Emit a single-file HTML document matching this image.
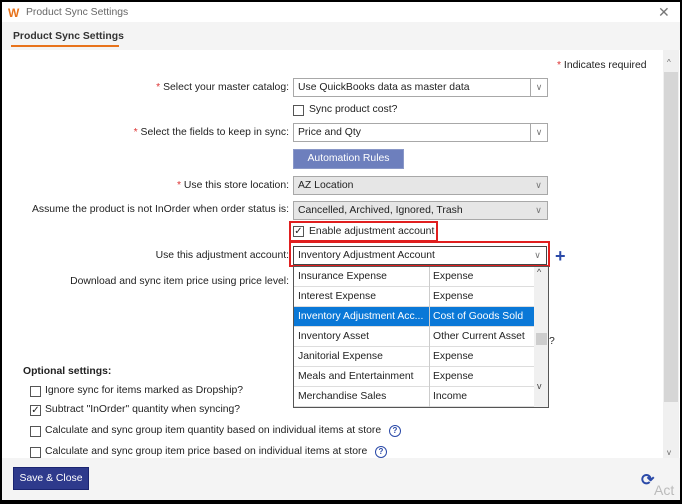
<!DOCTYPE html>
<html><head><style>
*{box-sizing:border-box;margin:0;padding:0}
body{width:682px;height:504px;background:#000;font-family:"Liberation Sans",sans-serif;font-size:10.4px;color:#222;position:relative;overflow:hidden}
.a{position:absolute}
.win{left:2px;top:2px;width:678px;height:498px;background:#fff}
.lbl{position:absolute;text-align:right;right:393px;white-space:nowrap}
.req{color:#d33}
.sel{position:absolute;left:293px;width:255px;height:19px;border:1px solid #a8a8a8;background:#fff;padding:3px 4px;white-space:nowrap}
.sel .d{position:absolute;right:0;top:0;width:17px;height:17px;border-left:1px solid #a8a8a8;color:#777;font-size:9px;text-align:center;line-height:17px}
.sel.g{background:#e6e6e6}
.sel.g .d{border-left:none}
.cb{position:absolute;width:11px;height:11px;border:1px solid #555;background:#fff;font-size:10px;line-height:9px;text-align:center}
.row{position:absolute;left:0;width:240px;height:20px;border-bottom:1px solid #ddd}
.row span{position:absolute;top:4px}
.help{position:absolute;width:12px;height:12px;border:1.5px solid #2b4aa8;border-radius:50%;color:#2b4aa8;font-size:8px;font-weight:bold;text-align:center;line-height:10px}
</style></head><body>
<div class="a win">
 <div class="a" style="left:6px;top:4px;color:#e8731b;font-weight:bold;font-size:12px">W</div>
 <div class="a" style="left:24px;top:5px;color:#666">Product Sync Settings</div>
 <div class="a" style="left:656px;top:2px;color:#777;font-size:14px">✕</div>
 <div class="a" style="left:0;top:20px;width:678px;height:28px;background:#f4f4f4"></div>
 <div class="a" style="left:11px;top:29px;font-weight:bold;color:#333">Product Sync Settings</div>
 <div class="a" style="left:9px;top:43px;width:108px;height:2px;background:#e8731b"></div>
 <div class="a" style="left:661px;top:48px;width:16px;height:408px;background:#f0f0f0"></div>
 <div class="a" style="left:665px;top:56px;color:#666;font-size:8px">^</div>
 <div class="a" style="left:662px;top:70px;width:14px;height:330px;background:#d6d6d6"></div>
 <div class="a" style="left:665px;top:446px;color:#666;font-size:8px">v</div>
 <div class="a" style="left:0;top:456px;width:678px;height:42px;background:#f4f4f4"></div>
</div>
<div class="a" style="left:557px;top:60px"><span class="req">*</span> Indicates required</div>

<div class="lbl" style="top:82px"><span class="req">*</span> Select your master catalog:</div>
<div class="sel" style="top:78px">Use QuickBooks data as master data<div class="d">∨</div></div>
<div class="cb" style="left:293px;top:105px"></div><div class="a" style="left:309px;top:104px">Sync product cost?</div>
<div class="lbl" style="top:127px"><span class="req">*</span> Select the fields to keep in sync:</div>
<div class="sel" style="top:123px">Price and Qty<div class="d">∨</div></div>
<div class="a" style="left:293px;top:149px;width:111px;height:20px;background:#6d7fbd;border:1px solid #8a98c8;color:#fff;text-align:center;line-height:18px">Automation Rules</div>
<div class="lbl" style="top:180px"><span class="req">*</span> Use this store location:</div>
<div class="sel g" style="top:176px">AZ Location<div class="d">∨</div></div>
<div class="lbl" style="top:204px">Assume the product is not InOrder when order status is:</div>
<div class="sel g" style="top:201px">Cancelled, Archived, Ignored, Trash<div class="d">∨</div></div>

<div class="a" style="left:289px;top:221px;width:149px;height:21px;border:2px solid #e01f1f"></div>
<div class="cb" style="left:293px;top:226px">✓</div><div class="a" style="left:309px;top:226px">Enable adjustment account</div>
<div class="lbl" style="top:250px">Use this adjustment account:</div>
<div class="a" style="left:289px;top:241px;width:261px;height:26px;border:2px solid #e01f1f"></div>
<div class="sel" style="top:246px;width:254px;border-color:#444">Inventory Adjustment Account<div class="d" style="border:none">∨</div></div>
<div class="a" style="left:555px;top:246px;color:#2b4aa8;font-size:18px;font-weight:bold">+</div>
<div class="lbl" style="top:276px">Download and sync item price using price level:</div>

<div class="a" style="left:293px;top:266px;width:256px;height:142px;border:1px solid #555;background:#fff;overflow:hidden">
 <div class="row" style="top:0"><span style="left:4px">Insurance Expense</span><span style="left:139px">Expense</span></div>
 <div class="row" style="top:20px"><span style="left:4px">Interest Expense</span><span style="left:139px">Expense</span></div>
 <div class="row" style="top:40px;background:#0a78d7;color:#fff"><span style="left:4px">Inventory Adjustment Acc...</span><span style="left:139px">Cost of Goods Sold</span></div>
 <div class="row" style="top:60px"><span style="left:4px">Inventory Asset</span><span style="left:139px">Other Current Asset</span></div>
 <div class="row" style="top:80px"><span style="left:4px">Janitorial Expense</span><span style="left:139px">Expense</span></div>
 <div class="row" style="top:100px"><span style="left:4px">Meals and Entertainment</span><span style="left:139px">Expense</span></div>
 <div class="row" style="top:120px"><span style="left:4px">Merchandise Sales</span><span style="left:139px">Income</span></div>
 <div class="a" style="left:135px;top:0;width:1px;height:142px;background:#ccc"></div>
 <div class="a" style="left:240px;top:0;width:15px;height:142px;background:#f0f0f0"></div>
 <div class="a" style="left:242px;top:66px;width:11px;height:12px;background:#cdcdcd"></div>
 <div class="a" style="left:243px;top:0;font-size:9px;color:#444">^</div>
 <div class="a" style="left:243px;top:114px;font-size:9px;color:#444">v</div>
</div>
<div class="a" style="left:549px;top:336px">?</div>

<div class="a" style="left:23px;top:366px;font-weight:bold">Optional settings:</div>
<div class="cb" style="left:30px;top:386px"></div><div class="a" style="left:45px;top:385px">Ignore sync for items marked as Dropship?</div>
<div class="cb" style="left:30px;top:405px">✓</div><div class="a" style="left:45px;top:404px">Subtract "InOrder" quantity when syncing?</div>
<div class="cb" style="left:30px;top:426px"></div><div class="a" style="left:45px;top:425px">Calculate and sync group item quantity based on individual items at store</div>
<div class="help" style="left:389px;top:425px">?</div>
<div class="cb" style="left:30px;top:447px"></div><div class="a" style="left:45px;top:446px">Calculate and sync group item price based on individual items at store</div>
<div class="help" style="left:375px;top:446px">?</div>

<div class="a" style="left:13px;top:467px;width:76px;height:23px;background:#2e3a8c;border:1px solid #1a2470;color:#fff;text-align:center;line-height:21px">Save &amp; Close</div>
<div class="a" style="left:641px;top:470px;color:#2b4aa8;font-size:16px;font-weight:bold">⟳</div>
<div class="a" style="left:654px;top:482px;color:#bbb;font-size:14px">Act</div>
</body></html>
